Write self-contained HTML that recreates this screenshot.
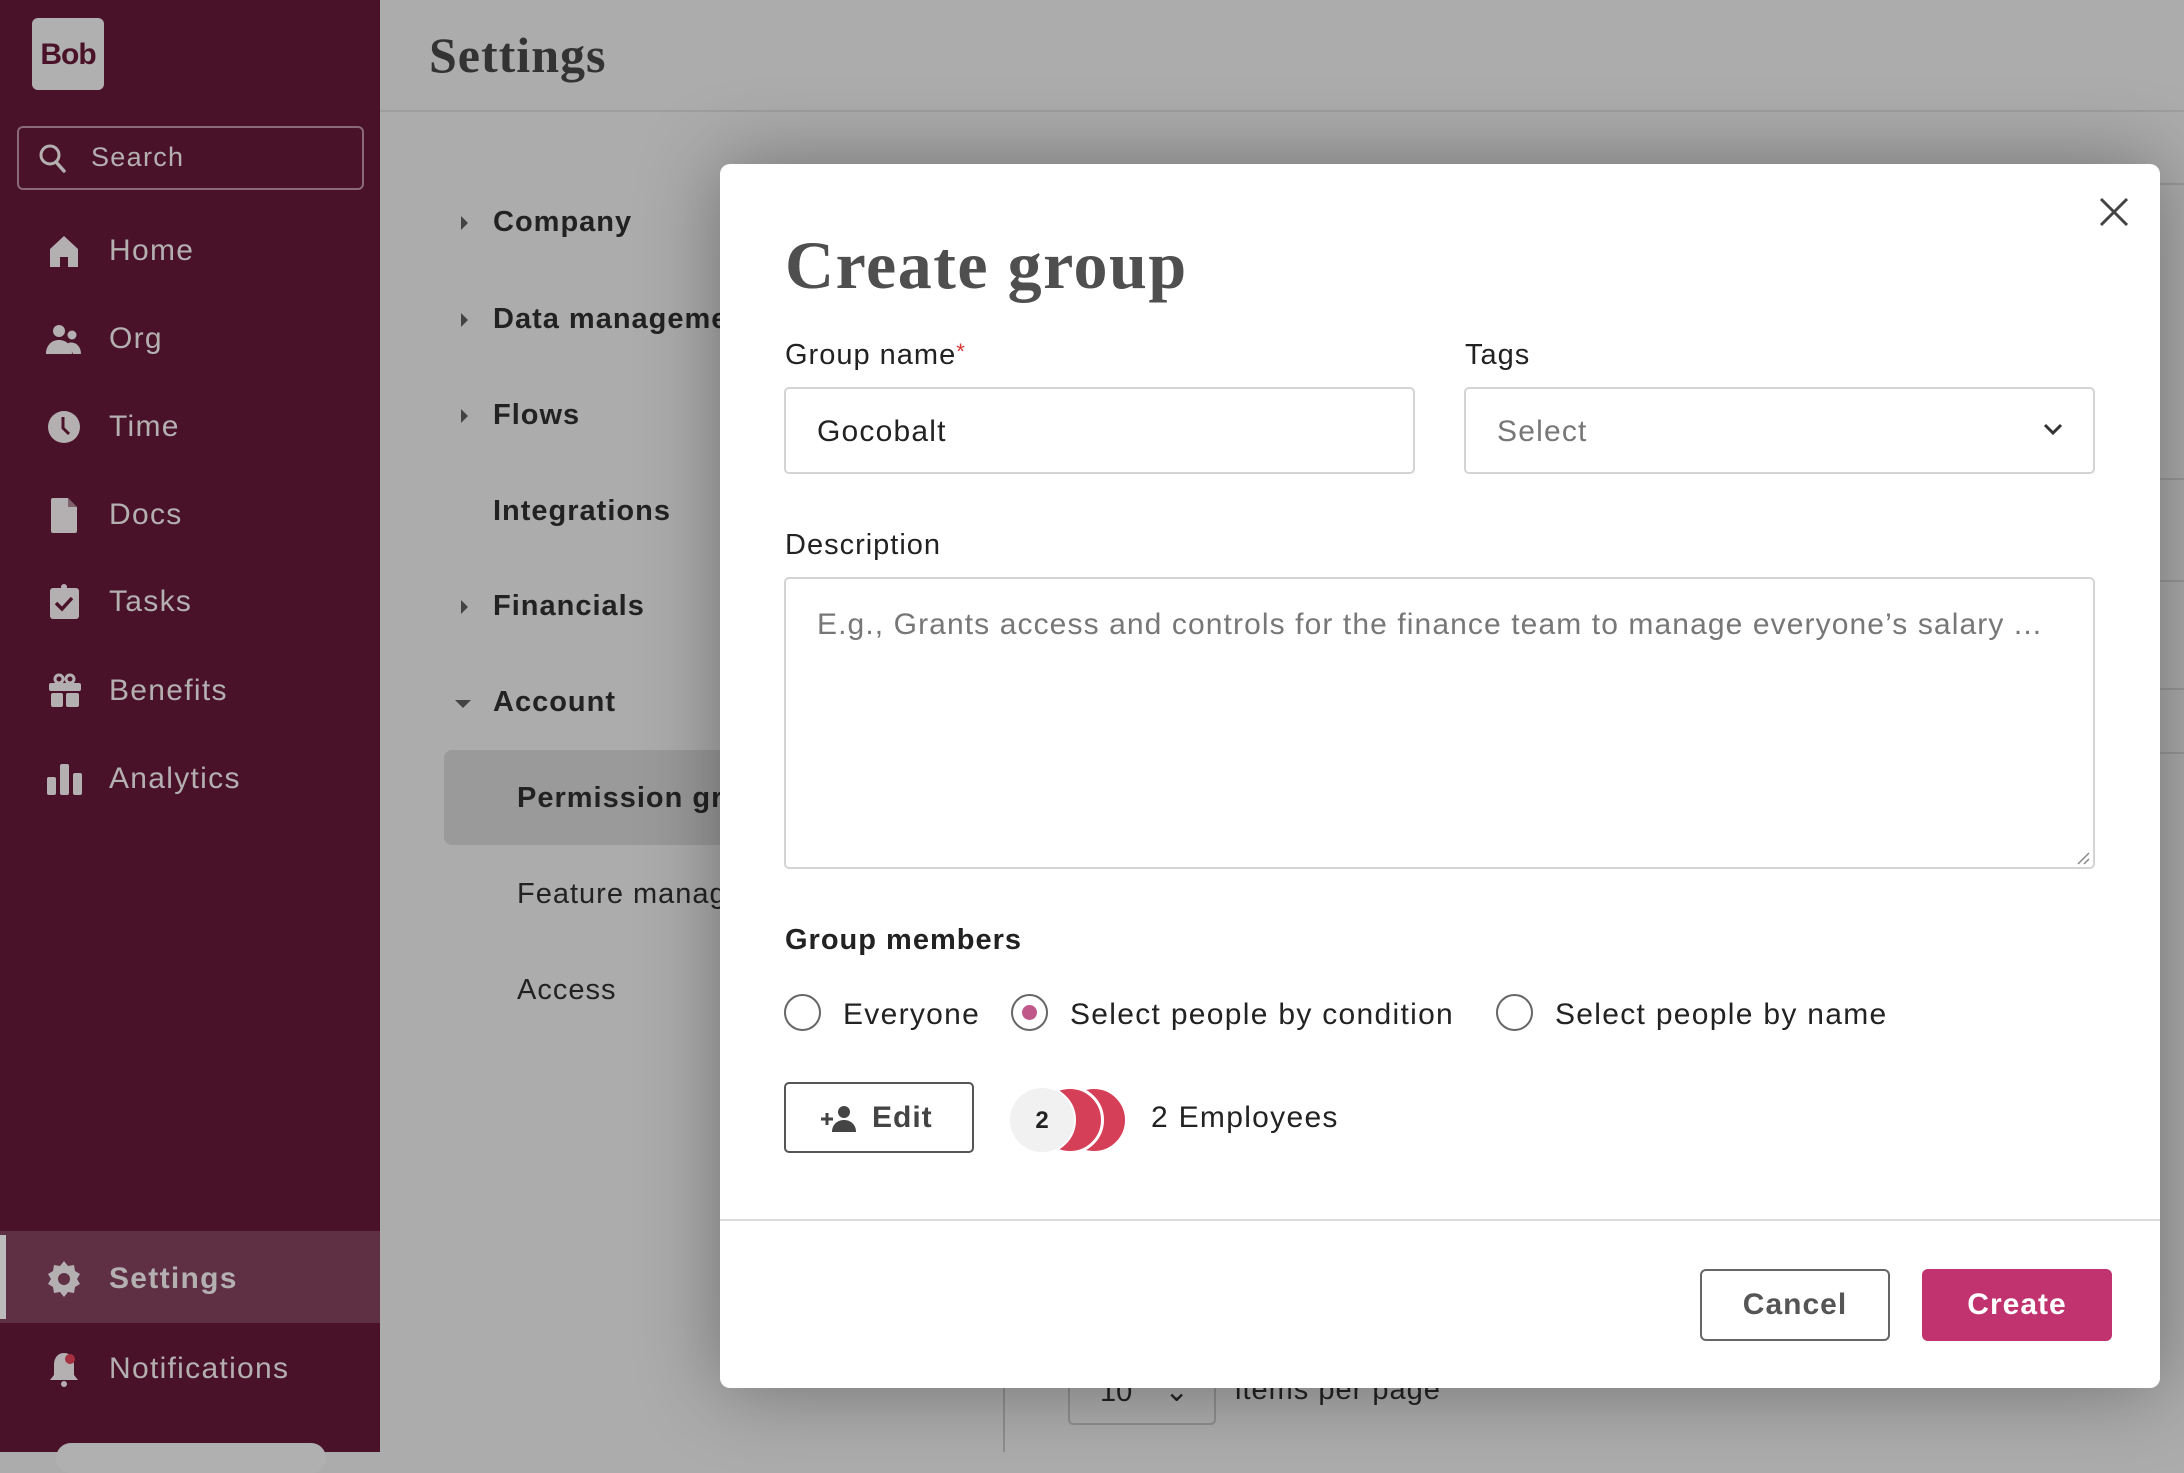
<!DOCTYPE html>
<html><head><meta charset="utf-8"><style>
*{box-sizing:border-box;margin:0;padding:0}
body{width:2184px;height:1452px;position:relative;overflow:hidden;background:#acacac;font-family:"Liberation Sans",sans-serif}
.a{position:absolute}
#side{left:0;top:0;width:380px;height:1452px;background:#4a1228}
.nav{position:absolute;left:0;width:380px;height:60px;display:flex;align-items:center;color:#b4b0b2;font-size:30px;letter-spacing:1.3px}
.nav svg{position:absolute;left:44px;width:40px;height:40px}
.nav span{position:absolute;left:109px}
.menu{position:absolute;font-size:29px;color:#222;font-weight:bold;letter-spacing:1px}
.tri{position:absolute;width:0;height:0;border-top:7px solid transparent;border-bottom:7px solid transparent;border-left:7px solid #444}
#modal{left:720px;top:164px;width:1440px;height:1224px;background:#fff;border-radius:10px;box-shadow:0 0 80px rgba(0,0,0,.35)}
.lbl{position:absolute;font-size:29px;color:#222;letter-spacing:1px}
.box{position:absolute;border:2px solid #d4d4d4;border-radius:5px}
.radio{position:absolute;width:37px;height:37px;border:2px solid #666;border-radius:50%}
.rt{position:absolute;font-size:30px;color:#222;letter-spacing:1.3px}
</style></head><body>
<div id="side" class="a">
 <div class="a" style="left:32px;top:18px;width:72px;height:72px;background:#b0b0b0;border-radius:6px;color:#4a1228;font-weight:bold;font-size:30px;line-height:74px;text-align:center;letter-spacing:-1px">Bob</div>
 <div class="a" style="left:17px;top:126px;width:347px;height:64px;border:2px solid #8a6a76;border-radius:6px"></div>
 <svg class="a" style="left:38px;top:143px" width="30" height="32" viewBox="0 0 30 32"><circle cx="12" cy="12" r="9" fill="none" stroke="#b4b0b2" stroke-width="3"/><path d="M18 19l8 9" stroke="#b4b0b2" stroke-width="3.5" stroke-linecap="round"/></svg>
 <div class="a" style="left:91px;top:142px;font-size:27px;color:#b4b0b2;letter-spacing:1.3px">Search</div>
 <div class="nav" style="top:221px"><svg viewBox="0 0 40 40"><path d="M6 18L20 5l14 13v18h-10v-10h-8v10H6z" fill="#b4b0b2"/></svg><span>Home</span></div>
 <div class="nav" style="top:309px"><svg viewBox="0 0 40 40"><circle cx="15" cy="12" r="6" fill="#b4b0b2"/><circle cx="28" cy="16" r="4.5" fill="#b4b0b2"/><path d="M2 35c0-9 6-14 13-14s13 5 13 14z M24 24c6-2 13 2 13 11h-8z" fill="#b4b0b2"/></svg><span>Org</span></div>
 <div class="nav" style="top:397px"><svg viewBox="0 0 40 40"><circle cx="20" cy="20" r="16" fill="#b4b0b2"/><path d="M19 10v11l6 6" stroke="#4a1228" stroke-width="3" fill="none"/></svg><span>Time</span></div>
 <div class="nav" style="top:485px"><svg viewBox="0 0 40 40"><path d="M9 3h15l9 9v24a2 2 0 0 1-2 2H9a2 2 0 0 1-2-2V5a2 2 0 0 1 2-2z" fill="#b4b0b2"/><path d="M24 3v9h9" fill="#4a1228" opacity=".5"/></svg><span>Docs</span></div>
 <div class="nav" style="top:572px"><svg viewBox="0 0 40 40"><rect x="6" y="6" width="29" height="31" rx="3" fill="#b4b0b2"/><circle cx="20" cy="5" r="3" fill="#b4b0b2"/><path d="M12 21l6 6 10-11" stroke="#4a1228" stroke-width="3.5" fill="none"/></svg><span>Tasks</span></div>
 <div class="nav" style="top:661px"><svg viewBox="0 0 40 40"><rect x="5" y="12" width="32" height="8" rx="2" fill="#b4b0b2"/><rect x="7" y="22" width="12" height="14" rx="2" fill="#b4b0b2"/><rect x="22" y="22" width="13" height="14" rx="2" fill="#b4b0b2"/><circle cx="15" cy="8" r="4" fill="none" stroke="#b4b0b2" stroke-width="3"/><circle cx="26" cy="8" r="4" fill="none" stroke="#b4b0b2" stroke-width="3"/></svg><span>Benefits</span></div>
 <div class="nav" style="top:749px"><svg viewBox="0 0 40 40"><rect x="3" y="18" width="9" height="18" rx="2" fill="#b4b0b2"/><rect x="16" y="5" width="9" height="31" rx="2" fill="#b4b0b2"/><rect x="29" y="14" width="9" height="22" rx="2" fill="#b4b0b2"/></svg><span>Analytics</span></div>
 <div class="a" style="left:0;top:1231px;width:380px;height:92px;background:#5f2f44"></div>
 <div class="a" style="left:0;top:1235px;width:6px;height:84px;background:#bbb"></div>
 <div class="nav" style="top:1249px;font-weight:bold"><svg viewBox="0 0 40 40"><path d="M20 2l4 5 6-1 1 6 5 3-3 5 3 5-5 3-1 6-6-1-4 5-4-5-6 1-1-6-5-3 3-5-3-5 5-3 1-6 6 1z" fill="#b4b0b2"/><circle cx="20" cy="20" r="6" fill="#5f2f44"/></svg><span>Settings</span></div>
 <div class="nav" style="top:1339px"><svg viewBox="0 0 40 40"><path d="M20 4c-7 0-10 6-10 12v10l-4 5h28l-4-5V16c0-6-3-12-10-12z" fill="#b4b0b2"/><circle cx="20" cy="35" r="3" fill="#b4b0b2"/><circle cx="26" cy="10" r="5" fill="#a5303f"/></svg><span>Notifications</span></div>
 <div class="a" style="left:56px;top:1443px;width:270px;height:30px;background:#b0b0b0;border-radius:15px"></div>
</div>
<div class="a" style="left:380px;top:110px;width:1804px;height:2px;background:#9e9e9e"></div>
<div class="a" style="left:429px;top:26px;font-family:'Liberation Serif',serif;font-size:50px;color:#333;font-weight:bold;letter-spacing:1px">Settings</div>
<div class="tri" style="left:461px;top:216px"></div><div class="menu" style="left:493px;top:206px">Company</div>
<div class="tri" style="left:461px;top:313px"></div><div class="menu" style="left:493px;top:303px">Data management</div>
<div class="tri" style="left:461px;top:409px"></div><div class="menu" style="left:493px;top:399px">Flows</div>
<div class="menu" style="left:493px;top:495px">Integrations</div>
<div class="tri" style="left:461px;top:600px"></div><div class="menu" style="left:493px;top:590px">Financials</div>
<div class="a" style="left:455px;top:700px;border-left:8px solid transparent;border-right:8px solid transparent;border-top:8px solid #444"></div><div class="menu" style="left:493px;top:686px">Account</div>
<div class="a" style="left:444px;top:750px;width:300px;height:95px;background:#9a9a9a;border-radius:8px"></div>
<div class="menu" style="left:517px;top:782px">Permission groups</div>
<div class="menu" style="left:517px;top:878px;font-weight:normal">Feature management</div>
<div class="menu" style="left:517px;top:974px;font-weight:normal">Access</div>
<div class="a" style="left:1003px;top:1370px;width:2px;height:82px;background:#8e8e8e"></div>
<div class="a" style="left:1068px;top:1365px;width:148px;height:60px;border:2px solid #8e8e8e;border-radius:5px"></div>
<div class="a" style="left:1100px;top:1374px;font-size:29px;color:#222">10 &nbsp;&nbsp; ⌄</div>
<div class="a" style="left:1235px;top:1374px;font-size:29px;color:#222;letter-spacing:1px">items per page</div>
<div class="a" style="left:2159px;top:183px;width:25px;height:2px;background:#999"></div>
<div class="a" style="left:2159px;top:478px;width:25px;height:2px;background:#999"></div>
<div class="a" style="left:2159px;top:580px;width:25px;height:2px;background:#999"></div>
<div class="a" style="left:2159px;top:688px;width:25px;height:2px;background:#999"></div>
<div class="a" style="left:2159px;top:752px;width:25px;height:2px;background:#999"></div>

<div id="modal" class="a">
 <svg class="a" style="left:1378px;top:32px" width="32" height="32" viewBox="0 0 32 32"><path d="M3 3l26 26M29 3L3 29" stroke="#444" stroke-width="3"/></svg>
 <div class="a" style="left:65px;top:62px;font-family:'Liberation Serif',serif;font-weight:bold;font-size:68px;color:#4f4f4f;letter-spacing:1.5px">Create group</div>
 <div class="lbl" style="left:65px;top:175px">Group name<span style="color:#d33;font-size:22px;vertical-align:top">*</span></div>
 <div class="lbl" style="left:745px;top:175px">Tags</div>
 <div class="box" style="left:64px;top:223px;width:631px;height:87px"></div>
 <div class="a" style="left:97px;top:251px;font-size:30px;color:#222;letter-spacing:1.2px">Gocobalt</div>
 <div class="box" style="left:744px;top:223px;width:631px;height:87px"></div>
 <div class="a" style="left:777px;top:251px;font-size:30px;color:#777;letter-spacing:1.2px">Select</div>
 <svg class="a" style="left:1323px;top:258px" width="20" height="14" viewBox="0 0 20 14"><path d="M2 3l8 8 8-8" stroke="#333" stroke-width="3" fill="none"/></svg>
 <div class="lbl" style="left:65px;top:365px">Description</div>
 <div class="box" style="left:64px;top:413px;width:1311px;height:292px"></div>
 <div class="a" style="left:97px;top:444px;font-size:30px;color:#777;letter-spacing:1.1px">E.g., Grants access and controls for the finance team to manage everyone’s salary ...</div>
 <svg class="a" style="left:1356px;top:687px" width="14" height="14" viewBox="0 0 14 14"><path d="M13 2L2 13M13 8l-5 5" stroke="#888" stroke-width="1.5"/></svg>
 <div class="lbl" style="left:65px;top:760px;font-weight:bold">Group members</div>
 <div class="radio" style="left:64px;top:830px"></div>
 <div class="rt" style="left:123px;top:834px">Everyone</div>
 <div class="radio" style="left:291px;top:830px"><div style="position:absolute;left:9px;top:9px;width:15px;height:15px;border-radius:50%;background:#c0588a"></div></div>
 <div class="rt" style="left:350px;top:834px">Select people by condition</div>
 <div class="radio" style="left:776px;top:830px"></div>
 <div class="rt" style="left:835px;top:834px">Select people by name</div>
 <div class="a" style="left:64px;top:918px;width:190px;height:71px;border:2px solid #555;border-radius:5px"></div>
 <svg class="a" style="left:100px;top:940px" width="40" height="30" viewBox="0 0 40 30"><path d="M7 9v12M1 15h12" stroke="#444" stroke-width="3"/><circle cx="24" cy="8" r="6" fill="#444"/><path d="M12 28c0-8 6-12 12-12s12 4 12 12z" fill="#444"/></svg>
 <div class="a" style="left:152px;top:937px;font-size:30px;font-weight:bold;color:#444;letter-spacing:1px">Edit</div>
 <div class="a" style="left:340px;top:922px;width:68px;height:68px;border-radius:50%;background:#d63f58;border:3px solid #fff"></div>
 <div class="a" style="left:316px;top:922px;width:68px;height:68px;border-radius:50%;background:#d63f58;border:3px solid #fff"></div>
 <div class="a" style="left:288px;top:922px;width:68px;height:68px;border-radius:50%;background:#f1f1f1;border:2px solid #fff;text-align:center;line-height:66px;font-size:24px;font-weight:bold;color:#222">2</div>
 <div class="rt" style="left:431px;top:937px">2 Employees</div>
 <div class="a" style="left:0;top:1055px;width:1440px;height:2px;background:#ddd"></div>
 <div class="a" style="left:980px;top:1105px;width:190px;height:72px;border:2px solid #666;border-radius:6px;text-align:center;line-height:68px;font-size:30px;font-weight:bold;color:#555;letter-spacing:1px">Cancel</div>
 <div class="a" style="left:1202px;top:1105px;width:190px;height:72px;background:#c0336f;border-radius:6px;text-align:center;line-height:72px;font-size:30px;font-weight:bold;color:#fff;letter-spacing:1px">Create</div>
</div>
</body></html>
